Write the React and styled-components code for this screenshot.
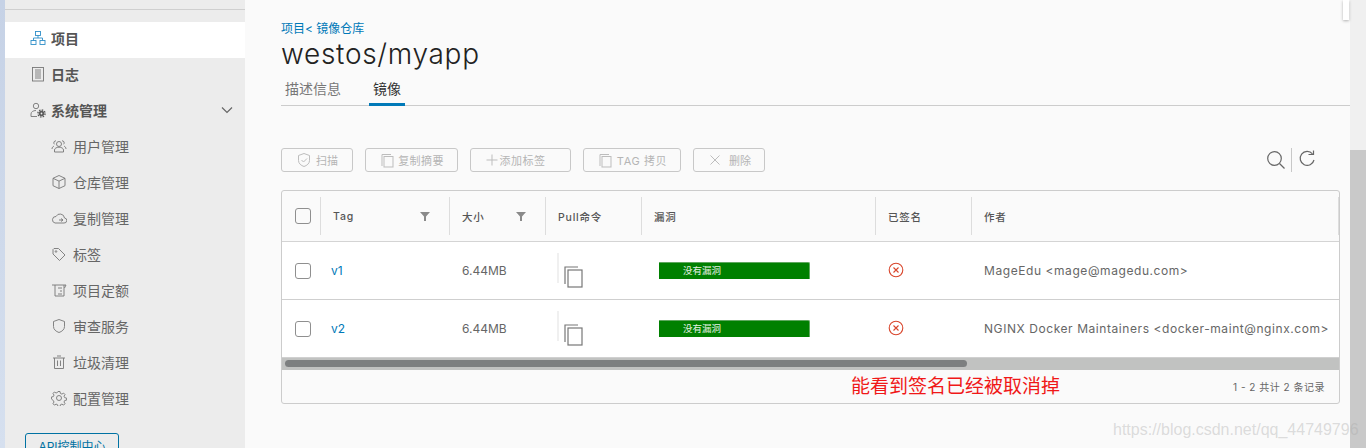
import React from 'react';
import styled, { createGlobalStyle } from 'styled-components';

const FONT = `Inter, "Noto Sans CJK SC", sans-serif`;

const GlobalStyle = createGlobalStyle`
  html, body {
    margin: 0;
    padding: 0;
    height: 448px;
    overflow: hidden;
    background: #fafafa;
    font-family: ${FONT};
  }
`;

const Page = styled.div`
  position: relative;
  display: flex;
  width: 1366px;
  height: 448px;
  overflow: hidden;
`;

const Strip = styled.div`
  width: 5px;
  background: linear-gradient(180deg, #c6d2e6 0%, #d6e0ef 100%);
`;

const Sidebar = styled.nav`
  width: 240px;
  flex: none;
  background: #ececec;
  padding-top: 9px;
  box-sizing: border-box;
`;

const SideRule = styled.div`
  height: 1px;
  background: #cfcfcf;
  margin-bottom: 12px;
`;

const NavRow = styled.div`
  display: flex;
  align-items: center;
  box-sizing: border-box;
  height: 36px;
  padding: 0 0 4px ${p => (p.$sub ? 46 : 25)}px;
  gap: ${p => (p.$sub ? 6 : 5)}px;
  background: ${p => (p.$active ? '#ffffff' : 'transparent')};
  color: ${p => (p.$sub ? '#666666' : '#555555')};
  font-size: 14px;
  font-weight: ${p => (p.$sub ? 400 : 700)};
  letter-spacing: 0;
`;

const NavIcon = styled.svg`
  width: 16px;
  height: 16px;
  flex: none;
  fill: none;
  stroke: ${p => p.$color || '#777777'};
  stroke-width: 0.9;
`;

const Chevron = styled.svg`
  width: 14px;
  height: 14px;
  margin-left: auto;
  margin-right: 11px;
  fill: none;
  stroke: #666;
  stroke-width: 1.2;
`;

const ApiButton = styled.button`
  display: block;
  margin: 15px 0 0 20px;
  width: 94px;
  height: 30px;
  padding: 0 0 6px;
  box-sizing: border-box;
  border: 1px solid #0072a3;
  border-radius: 3px;
  background: transparent;
  color: #0072a3;
  font: 400 12px ${FONT};
`;

const Main = styled.main`
  width: 1105px;
  flex: none;
  box-sizing: border-box;
  padding: 21px 0 0 36px;
`;

const Crumbs = styled.div`
  font-size: 12px;
  line-height: 16px;
  color: #0079b8;
`;

const Title = styled.h1`
  margin: 1px 0 0;
  font-size: 28px;
  line-height: 32px;
  font-weight: 300;
  color: #222;
  letter-spacing: 0.7px;
`;

const Tabs = styled.div`
  display: flex;
  height: 33px;
  margin-top: 2px;
  border-bottom: 1px solid #cccccc;
  box-sizing: content-box;
`;

const Tab = styled.div`
  box-sizing: border-box;
  height: 34px;
  padding: 7px 4px 0;
  margin-right: ${p => (p.$active ? 0 : 24)}px;
  font-size: 14px;
  line-height: 20px;
  color: ${p => (p.$active ? '#333' : '#777')};
  border-bottom: ${p => (p.$active ? '3px solid #0079b8' : 'none')};
`;

const Toolbar = styled.div`
  display: flex;
  align-items: center;
  height: 24px;
  margin-top: 42px;
  gap: 12px;
`;

const ActionButton = styled.button`
  display: flex;
  align-items: center;
  justify-content: center;
  gap: ${p => p.$gap ?? 4}px;
  width: ${p => p.$w}px;
  height: 24px;
  padding: 0 ${p => p.$padRight || 0}px 0 0;
  box-sizing: border-box;
  border: 1px solid #c8c8c8;
  border-radius: 3px;
  background: transparent;
  color: #b5b5b5;
  font: 400 11px ${FONT};
  letter-spacing: ${p => p.$spacing || 0}px;
`;

const ActionIcon = styled.svg`
  width: 16px;
  height: 16px;
  flex: none;
  fill: none;
  stroke: #bdbdbd;
  stroke-width: 1;
`;

const ToolIcons = styled.div`
  display: flex;
  align-items: center;
  margin-left: auto;
  margin-right: 33px;
  gap: 5px;
`;

const ToolDivider = styled.div`
  width: 1px;
  height: 24px;
  background: #c8c8c8;
`;

const ToolIcon = styled.svg`
  width: 20px;
  height: 20px;
  fill: none;
  stroke: #666;
  stroke-width: 1.2;
`;

const Grid = styled.div`
  margin: 18px 10px 0 0;
  height: 214px;
  box-sizing: border-box;
  border: 1px solid #cccccc;
  border-radius: 3px;
  overflow: hidden;
`;

const COLUMNS = '38px 129px 96px 96px 234px 96px 368px';

const HeadRow = styled.div`
  display: grid;
  grid-template-columns: ${COLUMNS};
  height: 51px;
  box-sizing: border-box;
  border-bottom: 1px solid #d4d4d4;
  align-items: center;
`;

const HeadCell = styled.div`
  display: flex;
  align-items: center;
  height: 38px;
  padding: 0 ${p => p.$right || 0}px 0 ${p => p.$left ?? 12}px;
  border-left: ${p => (p.$first ? 'none' : '1px solid #dddddd')};
  border-right: ${p => (p.$end ? '1px solid #dddddd' : 'none')};
  font-size: 10.5px;
  font-weight: 500;
  letter-spacing: 0.8px;
  color: #555;
`;

const Funnel = styled.svg`
  width: 10px;
  height: 10px;
  margin-left: auto;
  fill: #8a8a8a;
`;

const Check = styled.span`
  display: block;
  width: 16px;
  height: 16px;
  box-sizing: border-box;
  border: 1px solid #8f8f8f;
  border-radius: 3px;
  background: transparent;
`;

const BodyRow = styled.div`
  display: grid;
  grid-template-columns: ${COLUMNS};
  height: ${p => (p.$last ? 57 : 58)}px;
  background: #fff;
  border-bottom: ${p => (p.$last ? 'none' : '1px solid #cfcfcf')};
  box-sizing: border-box;
  align-items: center;
  font-size: 12px;
  color: #666;
`;

const Cell = styled.div`
  display: flex;
  align-items: center;
  height: 100%;
  padding-left: ${p => p.$left ?? 11}px;
  letter-spacing: ${p => p.$spacing || 0}px;
  position: relative;
`;

const TagLink = styled.span`
  color: #0079b8;
`;

const PullCell = styled(Cell)`
  padding-left: 18px;
  &::before {
    content: '';
    position: absolute;
    left: 12px;
    top: 11px;
    height: 30px;
    width: 2px;
    background: #f0f0f0;
  }
`;

const CopyIcon = styled.svg`
  width: 22px;
  height: 24px;
  margin-top: 11px;
  fill: none;
  stroke: #777;
  stroke-width: 1.2;
`;

const VulnBar = styled.div`
  width: 151px;
  height: 17px;
  margin-left: 7px;
  box-sizing: border-box;
  padding-left: 24px;
  background: #008000;
  border-radius: 0 2px 0 0;
  border-top: 1px solid #5fa85f;
  border-right: 1px solid #5fa85f;
  color: #e6f2e6;
  font-size: 9.5px;
  line-height: 15px;
`;

const SignIcon = styled.svg`
  width: 16px;
  height: 16px;
  margin: 0 0 1px 2px;
  fill: none;
  stroke: #d9452b;
  stroke-width: 1.1;
`;

const ScrollTrack = styled.div`
  height: 13px;
  background: #c1c2c1;
  border-top: 1px solid #d0d0d0;
  box-sizing: border-box;
  padding: 2px 3px 0;
`;

const ScrollThumb = styled.div`
  width: 682px;
  height: 7px;
  border-radius: 4px;
  background: #7d7f80;
`;

const Footer = styled.div`
  display: flex;
  align-items: center;
  height: 33px;
  padding: 0 14px 0 569px;
`;

const Annotation = styled.span`
  font-size: 19px;
  color: #f01818;
  line-height: 33px;
`;

const Count = styled.span`
  margin-left: auto;
  font-size: 10px;
  letter-spacing: 0.5px;
  color: #666;
`;

const ScrollBar = styled.div`
  width: 16px;
  flex: none;
  background: #f0f0f0;
  display: flex;
  flex-direction: column;
  padding-top: 150px;
  box-sizing: border-box;
`;

const ScrollBarThumb = styled.div`
  flex: 1;
  background: #c9c9c9;
`;

const Corner = styled.div`
  position: absolute;
  left: 1343px;
  top: 0;
  width: 6px;
  height: 20px;
  background: #fff;
  box-shadow: 0 1px 3px rgba(0, 0, 0, 0.3);
`;

const Watermark = styled.div`
  position: absolute;
  left: 1113px;
  top: 421px;
  font: 400 16px "Liberation Sans", sans-serif;
  color: rgba(170, 170, 170, 0.4);
  white-space: nowrap;
`;

const navIcons = {
  project: <><rect x="5.500" y="1.500" width="5" height="4" /><rect x="1" y="10.500" width="5" height="4" /><rect x="10" y="10.500" width="5" height="4" /><path d="M3.500 10.500V8h9v2.500M8 5.500V8" /></>,
  log: <><rect x="2.500" y="1.500" width="11" height="13.500" /><path d="M5 4h6M5 6h6M5 8h6M5 10h6M5 12h6" /></>,
  admin: <><circle cx="6" cy="4" r="2.700" /><path d="M1 14.500v-2.500c0-2 2-3.500 5-3.500M1 14.500h6" /><circle cx="11.500" cy="11.500" r="2.400" fill="#555" stroke="#555" /><circle cx="11.500" cy="11.500" r="3.600" strokeDasharray="1.500 1.300" stroke="#555" strokeWidth="1.300" /><circle cx="11.500" cy="11.500" r="0.900" fill="#ececec" stroke="none" /></>,
  users: <><circle cx="8" cy="6" r="2.500" /><path d="M3.500 14v-2c0-1.600 2-2.800 4.500-2.800s4.500 1.200 4.500 2.800v2z" /><path d="M5 2.800a2 2 0 0 0-1.500 3.500M11 2.800a2 2 0 0 1 1.500 3.500M1 11c0-1.500.8-2.500 2-2.800M15 11c0-1.500-.8-2.500-2-2.800" /></>,
  box: <><path d="M8 1.500l6 2.800v7.400l-6 2.800-6-2.800V4.300z" /><path d="M2 4.300l6 2.800 6-2.800M8 7.100v7.400" /></>,
  cloud: <><path d="M4 13h9a2.500 2.500 0 0 0 .5-5A4.500 4.500 0 0 0 5 6.500 3.300 3.300 0 0 0 4 13z" /><path d="M8 10h4M10 8.500l2 1.500-2 1.500" /></>,
  tag: <><path d="M2 3.500v4.500l6.500 6.500 5.500-5.500L7.500 2.500H3z" /><circle cx="5" cy="5.500" r=".8" /></>,
  quota: <><path d="M1 3h14l-1.500 3M4 3v11h9V3M7 6h4M9 9h2M7 12h4" /></>,
  shield: <path d="M8 1.500l5.500 2v5c0 3-2.500 5-5.500 6-3-1-5.500-3-5.500-6v-5z" />,
  trash: <><path d="M2 4h12M6 2h4M3.500 4v10.500h9V4M6.500 6.500v5.500M9.500 6.500v5.500" /></>,
  gear: <><circle cx="8" cy="8" r="2.500" /><path d="M7 1.500h2l.4 1.900 1.500.7 1.700-1 1.400 1.400-1 1.700.7 1.500 1.900.4v2l-1.900.4-.7 1.500 1 1.700-1.400 1.400-1.700-1-1.500.7-.4 1.900H7l-.4-1.900-1.500-.7-1.700 1-1.400-1.400 1-1.700-.7-1.500L.4 9V7l1.900-.4.7-1.500-1-1.700 1.400-1.400 1.700 1 1.500-.7z" /></>,
};

const subItems = [
  ['users', '用户管理'],
  ['box', '仓库管理'],
  ['cloud', '复制管理'],
  ['tag', '标签'],
  ['quota', '项目定额'],
  ['shield', '审查服务'],
  ['trash', '垃圾清理'],
  ['gear', '配置管理'],
];

const columns = [
  { name: 'Tag', filter: true },
  { name: '大小', filter: true },
  { name: 'Pull命令' },
  { name: '漏洞' },
  { name: '已签名' },
  { name: '作者' },
];

const images = [
  { tag: 'v1', size: '6.44MB', author: 'MageEdu <mage@magedu.com>' },
  { tag: 'v2', size: '6.44MB', author: 'NGINX Docker Maintainers <docker-maint@nginx.com>' },
];

const Icon = ({ name, color }) => (
  <NavIcon viewBox="0 0 16 16" $color={color}>{navIcons[name]}</NavIcon>
);

const copyPaths = <><path d="M3 14V2.500h9" /><rect x="5" y="4.500" width="9" height="10.500" /></>;

export default function App() {
  return (
    <Page>
      <GlobalStyle />
      <Strip />
      <Sidebar>
        <SideRule />
        <NavRow $active><Icon name="project" color="#2f8fc8" />项目</NavRow>
        <NavRow><Icon name="log" />日志</NavRow>
        <NavRow>
          <Icon name="admin" />系统管理
          <Chevron viewBox="0 0 14 14"><path d="M2 4.500l5 5 5-5" /></Chevron>
        </NavRow>
        {subItems.map(([icon, label]) => (
          <NavRow $sub key={label}><Icon name={icon} />{label}</NavRow>
        ))}
        <ApiButton>API控制中心</ApiButton>
      </Sidebar>
      <Main>
        <Crumbs>项目&lt; 镜像仓库</Crumbs>
        <Title>westos/myapp</Title>
        <Tabs>
          <Tab>描述信息</Tab>
          <Tab $active>镜像</Tab>
        </Tabs>
        <Toolbar>
          <ActionButton $w={72}>
            <ActionIcon viewBox="0 0 16 16"><path d="M8 1.500l5.500 2v5c0 3-2.500 5-5.500 6-3-1-5.500-3-5.500-6v-5z" /><path d="M5.500 8l2 2 3.500-3.500" /></ActionIcon>
            扫描
          </ActionButton>
          <ActionButton $w={93} $gap={3} $spacing={0.4}>
            <ActionIcon viewBox="0 0 16 16">{copyPaths}</ActionIcon>
            复制摘要
          </ActionButton>
          <ActionButton $w={101} $gap={0} $spacing={0.5} $padRight={12}>
            <ActionIcon viewBox="0 0 16 16"><path d="M8 2.500v11M2.500 8h11" /></ActionIcon>
            添加标签
          </ActionButton>
          <ActionButton $w={98} $spacing={0.6}>
            <ActionIcon viewBox="0 0 16 16">{copyPaths}</ActionIcon>
            TAG 拷贝
          </ActionButton>
          <ActionButton $w={72} $gap={6}>
            <ActionIcon viewBox="0 0 16 16"><path d="M3.500 3.500l9 9M12.500 3.500l-9 9" /></ActionIcon>
            删除
          </ActionButton>
          <ToolIcons>
            <ToolIcon viewBox="0 0 20 20"><circle cx="8.500" cy="8.500" r="6.800" /><path d="M13.500 13.500l5 5" /></ToolIcon>
            <ToolDivider />
            <ToolIcon viewBox="0 0 20 20"><path d="M15.500 3.800A7 7 0 1 0 17 10" /><path d="M11.500 3.500h5v-4" transform="translate(0 1)" /></ToolIcon>
          </ToolIcons>
        </Toolbar>
        <Grid>
          <HeadRow>
            <HeadCell $first $left={13}><Check /></HeadCell>
            {columns.map((col, i) => (
              <HeadCell key={col.name} $right={col.filter ? 19 : 0} $end={i === columns.length - 1}>
                {col.name}
                {col.filter && <Funnel viewBox="0 0 10 10"><path d="M0 1h10L6 5.500V10H4V5.500z" /></Funnel>}
              </HeadCell>
            ))}
          </HeadRow>
          {images.map((img, i) => (
            <BodyRow key={img.tag} $last={i === images.length - 1}>
              <Cell $left={13}><Check /></Cell>
              <Cell $left={11}><TagLink>{img.tag}</TagLink></Cell>
              <Cell $left={13}>{img.size}</Cell>
              <PullCell>
                <CopyIcon viewBox="0 0 22 24"><path d="M2 20V3h13" /><rect x="5" y="6" width="14" height="17" /></CopyIcon>
              </PullCell>
              <Cell $left={11}><VulnBar>没有漏洞</VulnBar></Cell>
              <Cell $left={11}>
                <SignIcon viewBox="0 0 16 16"><circle cx="8" cy="8" r="6.800" /><path d="M5.500 5.500l5 5M10.500 5.500l-5 5" /></SignIcon>
              </Cell>
              <Cell $left={13} $spacing={0.57}>{img.author}</Cell>
            </BodyRow>
          ))}
          <ScrollTrack><ScrollThumb /></ScrollTrack>
          <Footer>
            <Annotation>能看到签名已经被取消掉</Annotation>
            <Count>1 - 2 共计 2 条记录</Count>
          </Footer>
        </Grid>
      </Main>
      <ScrollBar><ScrollBarThumb /></ScrollBar>
      <Corner />
      <Watermark>https://blog.csdn.net/qq_44749796</Watermark>
    </Page>
  );
}
